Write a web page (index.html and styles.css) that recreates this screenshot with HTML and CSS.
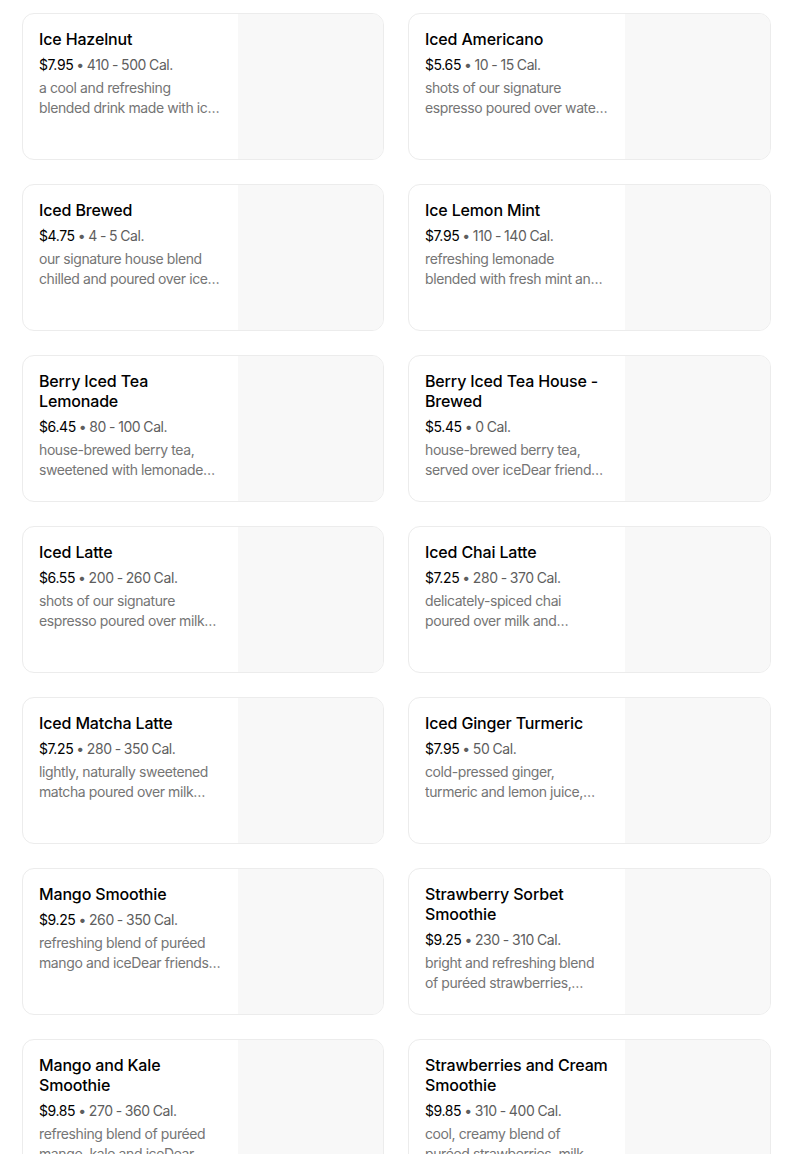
FILE: index.html
```html
<!DOCTYPE html>
<html>
<head>
<meta charset="utf-8">
<link rel="stylesheet" href="styles.css">
</head>
<body>
<div class="grid">
  <div class="card"><div class="info"><div class="title">Ice Hazelnut</div><div class="meta"><span class="price">$7.95</span> • 410 - 500 Cal.</div><div class="desc"><span class="line">a cool and refreshing</span><span class="line">blended drink made with ic…</span></div></div><div class="thumb"></div></div>
  <div class="card"><div class="info"><div class="title">Iced Americano</div><div class="meta"><span class="price">$5.65</span> • 10 - 15 Cal.</div><div class="desc"><span class="line">shots of our signature</span><span class="line">espresso poured over wate…</span></div></div><div class="thumb"></div></div>
  <div class="card"><div class="info"><div class="title">Iced Brewed</div><div class="meta"><span class="price">$4.75</span> • 4 - 5 Cal.</div><div class="desc"><span class="line">our signature house blend</span><span class="line">chilled and poured over ice…</span></div></div><div class="thumb"></div></div>
  <div class="card"><div class="info"><div class="title">Ice Lemon Mint</div><div class="meta"><span class="price">$7.95</span> • 110 - 140 Cal.</div><div class="desc"><span class="line">refreshing lemonade</span><span class="line">blended with fresh mint an…</span></div></div><div class="thumb"></div></div>
  <div class="card"><div class="info"><div class="title">Berry Iced Tea Lemonade</div><div class="meta"><span class="price">$6.45</span> • 80 - 100 Cal.</div><div class="desc"><span class="line">house-brewed berry tea,</span><span class="line">sweetened with lemonade…</span></div></div><div class="thumb"></div></div>
  <div class="card"><div class="info"><div class="title">Berry Iced Tea House - Brewed</div><div class="meta"><span class="price">$5.45</span> • 0 Cal.</div><div class="desc"><span class="line">house-brewed berry tea,</span><span class="line">served over iceDear friend…</span></div></div><div class="thumb"></div></div>
  <div class="card"><div class="info"><div class="title">Iced Latte</div><div class="meta"><span class="price">$6.55</span> • 200 - 260 Cal.</div><div class="desc"><span class="line">shots of our signature</span><span class="line">espresso poured over milk…</span></div></div><div class="thumb"></div></div>
  <div class="card"><div class="info"><div class="title">Iced Chai Latte</div><div class="meta"><span class="price">$7.25</span> • 280 - 370 Cal.</div><div class="desc"><span class="line">delicately-spiced chai</span><span class="line">poured over milk and…</span></div></div><div class="thumb"></div></div>
  <div class="card"><div class="info"><div class="title">Iced Matcha Latte</div><div class="meta"><span class="price">$7.25</span> • 280 - 350 Cal.</div><div class="desc"><span class="line">lightly, naturally sweetened</span><span class="line">matcha poured over milk…</span></div></div><div class="thumb"></div></div>
  <div class="card"><div class="info"><div class="title">Iced Ginger Turmeric</div><div class="meta"><span class="price">$7.95</span> • 50 Cal.</div><div class="desc"><span class="line">cold-pressed ginger,</span><span class="line">turmeric and lemon juice,…</span></div></div><div class="thumb"></div></div>
  <div class="card"><div class="info"><div class="title">Mango Smoothie</div><div class="meta"><span class="price">$9.25</span> • 260 - 350 Cal.</div><div class="desc"><span class="line">refreshing blend of puréed</span><span class="line">mango and iceDear friends…</span></div></div><div class="thumb"></div></div>
  <div class="card"><div class="info"><div class="title">Strawberry Sorbet Smoothie</div><div class="meta"><span class="price">$9.25</span> • 230 - 310 Cal.</div><div class="desc"><span class="line">bright and refreshing blend</span><span class="line">of puréed strawberries,…</span></div></div><div class="thumb"></div></div>
  <div class="card"><div class="info"><div class="title">Mango and Kale Smoothie</div><div class="meta"><span class="price">$9.85</span> • 270 - 360 Cal.</div><div class="desc"><span class="line">refreshing blend of puréed</span><span class="line">mango, kale and iceDear…</span></div></div><div class="thumb"></div></div>
  <div class="card"><div class="info"><div class="title">Strawberries and Cream Smoothie</div><div class="meta"><span class="price">$9.85</span> • 310 - 400 Cal.</div><div class="desc"><span class="line">cool, creamy blend of</span><span class="line">puréed strawberries, milk…</span></div></div><div class="thumb"></div></div>
</div>
</body>
</html>
```
FILE: styles.css
```css
html, body {
  margin: 0;
  padding: 0;
  background: #ffffff;
}
body {
  font-family: Inter, Roboto, "Liberation Sans", Arial, sans-serif;
  color: #000000;
}
.grid {
  display: grid;
  grid-template-columns: 362px 363px;
  column-gap: 24px;
  row-gap: 24px;
  padding: 13px 0 0 22px;
}
.card {
  display: flex;
  height: 147px;
  box-sizing: border-box;
  border: 1px solid #ececec;
  border-radius: 12px;
  overflow: hidden;
  background: #ffffff;
}
.info {
  flex: 1;
  min-width: 0;
  padding: 15px 16px 0 16px;
}
.thumb {
  flex: none;
  width: 145px;
  background: #f8f8f8;
}
.title {
  font-size: 16px;
  font-weight: 500;
  line-height: 20px;
  letter-spacing: -0.15px;
  color: #000000;
}
.meta {
  margin-top: 6px;
  font-size: 14px;
  line-height: 20px;
  letter-spacing: -0.4px;
  word-spacing: -0.5px;
  color: #5e5e5e;
}
.price {
  color: #000000;
}
.desc {
  margin-top: 3px;
  font-size: 14px;
  line-height: 20px;
  letter-spacing: -0.4px;
  color: #757575;
}
.line {
  display: block;
  white-space: nowrap;
  overflow: hidden;
  text-overflow: ellipsis;
}
```
